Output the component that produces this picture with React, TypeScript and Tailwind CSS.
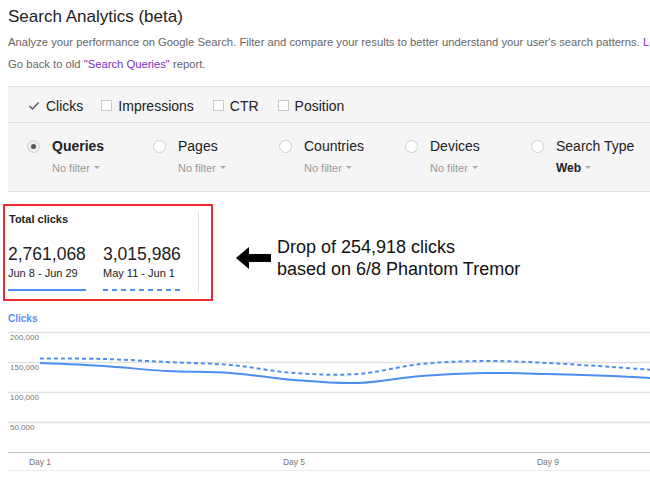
import React from 'react';

const solid = [363, 366, 371, 373, 380, 383, 376, 373, 374, 376, 379.5];
const dashed = [358.5, 359, 362, 365, 373, 374, 364, 361, 363, 367, 371.5];

function smoothPath(ys: number[]) {
  const pts = ys.map((y, i) => [40 + i * 63.5, y]);
  let d = `M${pts[0][0]},${pts[0][1]}`;
  for (let i = 0; i < pts.length - 1; i++) {
    const p0 = pts[i - 1] || pts[i];
    const p1 = pts[i];
    const p2 = pts[i + 1];
    const p3 = pts[i + 2] || p2;
    const c1x = p1[0] + (p2[0] - p0[0]) / 6;
    const c1y = p1[1] + (p2[1] - p0[1]) / 6;
    const c2x = p2[0] - (p3[0] - p1[0]) / 6;
    const c2y = p2[1] - (p3[1] - p1[1]) / 6;
    d += ` C${c1x},${c1y} ${c2x},${c2y} ${p2[0]},${p2[1]}`;
  }
  return d;
}

function Checkbox() {
  return <span className="w-[11px] h-[11px] border border-[#c8c8c8] bg-white mr-[6px] shrink-0" />;
}

function Caret() {
  return <span className="inline-block ml-[4px] mb-[2px] w-0 h-0 border-l-[3px] border-r-[3px] border-t-[3px] border-l-transparent border-r-transparent border-t-[#aaa]" />;
}

const dimensions = [
  { name: 'Queries', filter: 'No filter', active: true },
  { name: 'Pages', filter: 'No filter' },
  { name: 'Countries', filter: 'No filter' },
  { name: 'Devices', filter: 'No filter' },
  { name: 'Search Type', filter: 'Web', bold: true },
];

export default function App() {
  return (
    <div className="w-[650px] h-[484px] overflow-hidden bg-white text-[#222] font-['Liberation_Sans',Arial,sans-serif]">
      <div className="pl-2 pt-[7px] text-[17px] leading-[20px]">Search Analytics (beta)</div>
      <div className="pl-2 mt-[4px] text-[11.25px] leading-[22px] text-[#666]">
        <div className="whitespace-nowrap overflow-hidden">
          Analyze your performance on Google Search. Filter and compare your results to better understand your user's search patterns. <span className="text-[#7a2fc0]">Learn more</span>
        </div>
        <div>
          Go back to old <span className="text-[#7a2fc0]">"Search Queries"</span> report.
        </div>
      </div>

      <div className="ml-2 mt-[11px] border-y border-[#e0e0e0] bg-[#f5f5f5]">
        <div className="h-[35px] pt-[2px] flex items-center pl-[21px] text-[14px] leading-[18px]">
          <svg width="10" height="8" viewBox="0 0 10 8" className="mr-[7px]">
            <polyline points="0.5,4 3.5,7 9.5,0.5" fill="none" stroke="#555" strokeWidth="1.4" />
          </svg>
          <span>Clicks</span>
          <span className="ml-[18px] flex items-center"><Checkbox />Impressions</span>
          <span className="ml-[19px] flex items-center"><Checkbox />CTR</span>
          <span className="ml-[19px] flex items-center"><Checkbox />Position</span>
        </div>
        <div className="h-[69px] border-t border-[#e0e0e0] flex pl-[19px] pt-[14px]">
          {dimensions.map(d => (
            <div key={d.name} className="w-[126px] flex items-start shrink-0">
              <span className={`mt-[3px] mr-[12px] w-[13px] h-[13px] rounded-full border border-[#cfcfcf] flex items-center justify-center shrink-0 ${d.active ? 'bg-[#ececec]' : 'bg-white'}`}>
                {d.active && <span className="w-[5px] h-[5px] rounded-full bg-[#555]" />}
              </span>
              <div className="flex flex-col whitespace-nowrap">
                <span className={`text-[14px] leading-[18px] ${d.active ? 'font-bold' : ''}`}>{d.name}</span>
                <span className={`mt-[6px] leading-[14px] flex items-center ${d.bold ? 'text-[12px] font-bold text-[#222]' : 'text-[11px] text-[#999]'}`}>
                  {d.filter}<Caret />
                </span>
              </div>
            </div>
          ))}
        </div>
      </div>

      <div className="flex items-start mt-[12px] ml-[3px]">
        <div className="w-[210px] h-[97px] border-2 border-[#f02a2a] flex">
          <div className="w-[193px] pl-[3px] pt-[7px]">
            <div className="pl-[1px] text-[11px] leading-[13px] font-bold">Total clicks</div>
            <div className="flex mt-[18px]">
              <div className="w-[95px]">
                <div className="text-[17.5px] leading-[20px]">2,761,068</div>
                <div className="mt-[3px] text-[11px] leading-[13px]">Jun 8 - Jun 29</div>
                <div className="mt-[9px] w-[78px] h-[2px] bg-[#4d8ef5]" />
              </div>
              <div>
                <div className="text-[17.5px] leading-[20px]">3,015,986</div>
                <div className="mt-[3px] text-[11px] leading-[13px]">May 11 - Jun 1</div>
                <svg width="79" height="2" className="mt-[9px] block">
                  <line x1="0" y1="1" x2="79" y2="1" stroke="#4d8ef5" strokeWidth="2" strokeDasharray="5 4" />
                </svg>
              </div>
            </div>
          </div>
          <div className="w-px h-[80px] mt-[6px] bg-[#dcdcdc]" />
        </div>

        <div className="flex items-center ml-[23px] mt-[32px]">
          <svg width="35" height="22" viewBox="0 0 35 22">
            <polygon points="0,11 13,0 13,7 35,7 35,15 13,15 13,22" fill="#000" />
          </svg>
          <div className="ml-[6px] text-[18px] leading-[22px] text-[#111]">
            <div>Drop of 254,918 clicks</div>
            <div>based on 6/8 Phantom Tremor</div>
          </div>
        </div>
      </div>

      <div className="pl-2 mt-[12px] text-[10px] leading-[12px] font-bold text-[#5a8ef0]">Clicks</div>
      <svg width="650" height="158" className="block mt-[1px]">
        <g transform="translate(0,-326)">
          {[332, 362, 392, 422].map(y => (
            <line key={y} x1="8" x2="650" y1={y + 0.5} y2={y + 0.5} stroke="#e2e2e2" strokeWidth="1.5" />
          ))}
          <line x1="8" x2="650" y1="452.5" y2="452.5" stroke="#c4c4c4" strokeWidth="1" />
          <line x1="8" x2="650" y1="470.5" y2="470.5" stroke="#ececec" strokeWidth="1" />
          {[['200,000', 340], ['150,000', 370], ['100,000', 400], ['50,000', 430]].map(([t, y]) => (
            <text key={t} x="10" y={y} fontSize="8" fill="#777" fontFamily="Liberation Sans, Arial, sans-serif">{t}</text>
          ))}
          {[['Day 1', 40], ['Day 5', 294], ['Day 9', 548]].map(([t, x]) => (
            <text key={t} x={x} y="465" fontSize="8.5" fill="#777" textAnchor="middle" fontFamily="Liberation Sans, Arial, sans-serif">{t}</text>
          ))}
          <path d={smoothPath(dashed)} fill="none" stroke="#4d8ef5" strokeWidth="2" strokeDasharray="4 3" />
          <path d={smoothPath(solid)} fill="none" stroke="#4d8ef5" strokeWidth="2" />
        </g>
      </svg>
    </div>
  );
}
